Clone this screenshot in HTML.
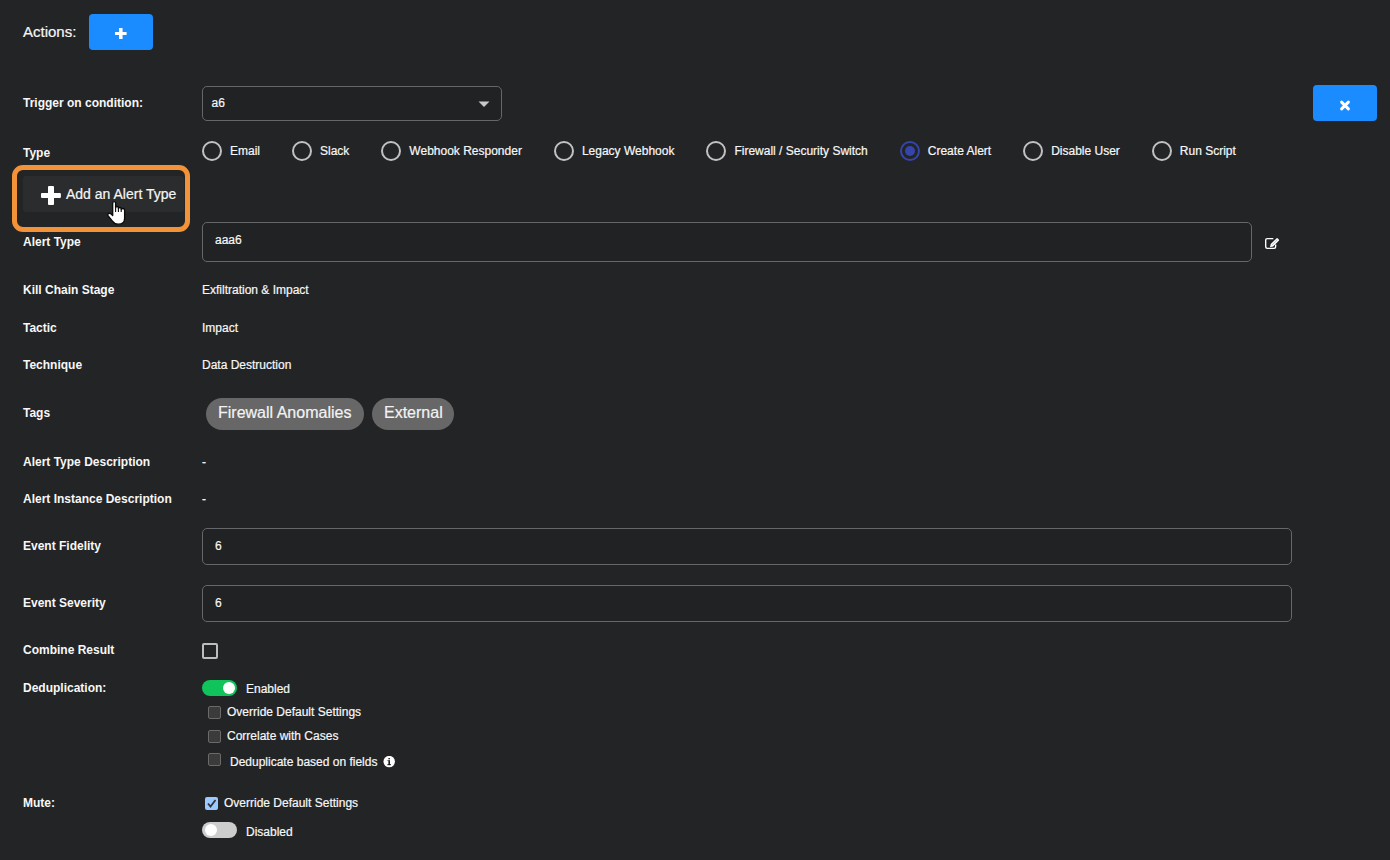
<!DOCTYPE html>
<html><head><meta charset="utf-8">
<style>
html,body{margin:0;padding:0;}
body{width:1390px;height:860px;overflow:hidden;background:#232426;font-family:"Liberation Sans",sans-serif;color:#f7f7f7;position:relative;-webkit-text-stroke:0.2px #f7f7f7;}
.a{position:absolute;white-space:nowrap;line-height:14px;}
.lb{font-size:12px;font-weight:700;left:23px;-webkit-text-stroke:0;}
.v{font-size:12px;left:202px;}
.btn{position:absolute;width:64px;height:36px;background:#1a8cff;border-radius:4px;}
.inp{position:absolute;border:1px solid #65686b;border-radius:5px;box-sizing:border-box;background:#212224;}
.ri{display:flex;align-items:center;height:20px;margin-right:32px;}
.rc{width:20px;height:20px;box-sizing:border-box;border:2px solid #c2c2c2;border-radius:50%;}
.rt{font-size:12px;margin-left:8px;line-height:14px;}
.pill{position:absolute;top:398px;height:32px;border-radius:16px;background:#676767;font-size:16px;line-height:30px;color:#f2f2f2;box-sizing:border-box;padding:0 12px;}
.cb{position:absolute;width:13px;height:13px;box-sizing:border-box;border:1px solid #6a6a6a;background:#3b3b3b;border-radius:2px;}
</style></head>
<body>
<!-- Actions -->
<div class="a" style="left:23px;top:24px;font-size:15px;line-height:15px;">Actions:</div>
<div class="btn" style="left:89px;top:14px;">
  <svg width="64" height="36" style="position:absolute;left:0;top:0"><path d="M26 19.5h11.6" stroke="#fff" stroke-width="3"/><path d="M31.8 14v11" stroke="#fff" stroke-width="3.5"/></svg>
</div>

<!-- Trigger -->
<div class="a lb" style="top:96px;">Trigger on condition:</div>
<div class="inp" style="left:202px;top:86px;width:300px;height:35px;"></div>
<div class="a v" style="left:211.5px;top:96px;">a6</div>
<svg style="position:absolute;left:478px;top:101px" width="12" height="7"><path d="M0.5 0.5h11L6 6z" fill="#c8c8c8"/></svg>

<div class="btn" style="left:1313px;top:85px;">
  <svg width="64" height="36" style="position:absolute;left:0;top:0"><path d="M28.6 17.1L35.4 23.9M35.4 17.1L28.6 23.9" stroke="#fff" stroke-width="3" stroke-linecap="round"/></svg>
</div>

<!-- Type -->
<div class="a lb" style="top:146px;">Type</div>
<div style="position:absolute;left:202px;top:141px;height:20px;display:flex;align-items:center;">
  <div class="ri"><div class="rc"></div><span class="rt">Email</span></div>
  <div class="ri"><div class="rc"></div><span class="rt">Slack</span></div>
  <div class="ri"><div class="rc"></div><span class="rt">Webhook Responder</span></div>
  <div class="ri"><div class="rc"></div><span class="rt">Legacy Webhook</span></div>
  <div class="ri"><div class="rc"></div><span class="rt">Firewall / Security Switch</span></div>
  <div class="ri"><div class="rc" style="border-color:#3545ab;position:relative"><div style="position:absolute;left:3px;top:3px;width:10px;height:10px;border-radius:50%;background:#3545ab"></div></div><span class="rt">Create Alert</span></div>
  <div class="ri"><div class="rc"></div><span class="rt">Disable User</span></div>
  <div class="ri"><div class="rc"></div><span class="rt">Run Script</span></div>
</div>

<!-- Add alert type highlight -->
<div style="position:absolute;left:12px;top:165px;width:178px;height:67px;box-sizing:border-box;border:5px solid #f29339;border-radius:11px;"></div>
<div style="position:absolute;left:23px;top:176px;width:161px;height:36px;background:#2b2c2e;border-radius:3px;"></div>
<svg style="position:absolute;left:41px;top:186px" width="20" height="19"><rect x="7" y="0.1" width="6" height="18.8" rx="1" fill="#fff"/><rect x="0" y="7.1" width="19.9" height="5" rx="1" fill="#fff"/></svg>
<div class="a" style="left:66px;top:187px;font-size:14px;line-height:14px;color:#f4f4f4">Add an Alert Type</div>

<!-- Alert Type -->
<div class="a lb" style="top:235px;">Alert Type</div>
<div class="inp" style="left:202px;top:222px;width:1050px;height:40px;"></div>
<div class="a v" style="left:215px;top:233px;">aaa6</div>
<svg style="position:absolute;left:1264px;top:236px" width="17" height="15"><path d="M9.3 2.55H3.2a1.5 1.5 0 0 0-1.5 1.5v6.8a1.5 1.5 0 0 0 1.5 1.5h6.95a1.5 1.5 0 0 0 1.5-1.5V8.6" fill="none" stroke="#fff" stroke-width="1.35"/><g transform="translate(-0.2 0.9)"><path d="M6.2 10.3L6.9 7.2L12.6 1.5Q13.3 0.8 14 1.5L15 2.5Q15.7 3.2 15 3.9L9.3 9.6Z" fill="#fff"/><path d="M8.2 8.3L13.6 2.9" stroke="#777" stroke-width="0.5"/></g></svg>

<div class="a lb" style="top:283px;">Kill Chain Stage</div>
<div class="a v" style="top:283px;">Exfiltration &amp; Impact</div>
<div class="a lb" style="top:321px;">Tactic</div>
<div class="a v" style="top:321px;">Impact</div>
<div class="a lb" style="top:358px;">Technique</div>
<div class="a v" style="top:358px;">Data Destruction</div>

<div class="a lb" style="top:406px;">Tags</div>
<div class="pill" style="left:206px;width:158px;">Firewall Anomalies</div>
<div class="pill" style="left:372px;width:82px;">External</div>

<div class="a lb" style="top:455px;">Alert Type Description</div>
<div class="a v" style="top:455px;">-</div>
<div class="a lb" style="top:492px;">Alert Instance Description</div>
<div class="a v" style="top:492px;">-</div>

<div class="a lb" style="top:539px;">Event Fidelity</div>
<div class="inp" style="left:202px;top:528px;width:1090px;height:37px;"></div>
<div class="a v" style="left:215px;top:539px;">6</div>
<div class="a lb" style="top:596px;">Event Severity</div>
<div class="inp" style="left:202px;top:585px;width:1090px;height:37px;"></div>
<div class="a v" style="left:215px;top:596px;">6</div>

<div class="a lb" style="top:643px;">Combine Result</div>
<div style="position:absolute;left:202px;top:643px;width:16px;height:16px;box-sizing:border-box;border:2px solid #bdbdbd;border-radius:2px;"></div>

<div class="a lb" style="top:681px;">Deduplication:</div>
<div style="position:absolute;left:202px;top:680px;width:35px;height:16px;border-radius:8px;background:#11c35b;"></div>
<div style="position:absolute;left:223px;top:682px;width:12px;height:12px;border-radius:50%;background:#fff;"></div>
<div class="a v" style="left:246px;top:682px;">Enabled</div>

<div class="cb" style="left:208px;top:706px;"></div>
<div class="a v" style="left:227px;top:705px;">Override Default Settings</div>
<div class="cb" style="left:208px;top:730px;"></div>
<div class="a v" style="left:227px;top:729px;">Correlate with Cases</div>
<div class="cb" style="left:208px;top:753px;"></div>
<div class="a v" style="left:230px;top:755px;">Deduplicate based on fields</div>
<svg style="position:absolute;left:383px;top:756px" width="13" height="12"><circle cx="6.2" cy="5.6" r="5.7" fill="#fff"/><rect x="5.4" y="2" width="1.5" height="1.3" fill="#1a1a1a"/><rect x="5.4" y="4.2" width="1.6" height="4.8" fill="#1a1a1a"/><rect x="4.5" y="4.2" width="1" height="0.9" fill="#1a1a1a"/><rect x="4.3" y="8.2" width="3.7" height="1" fill="#1a1a1a"/></svg>

<div class="a lb" style="top:796px;">Mute:</div>
<div style="position:absolute;left:205px;top:797px;width:13px;height:13px;border-radius:2px;background:#9cc9ff;"></div>
<svg style="position:absolute;left:205px;top:797px" width="13" height="13"><path d="M3 6.5l2.5 3L10.5 3" fill="none" stroke="#333" stroke-width="1.8"/></svg>
<div class="a v" style="left:224px;top:796px;">Override Default Settings</div>
<div style="position:absolute;left:202px;top:822px;width:35px;height:16px;border-radius:8px;background:#cdcdcd;"></div>
<div style="position:absolute;left:205px;top:824px;width:12px;height:12px;border-radius:50%;background:#fff;"></div>
<div class="a v" style="left:246px;top:825px;">Disabled</div>

<!-- cursor -->
<svg style="position:absolute;left:104px;top:198px" width="24" height="30" viewBox="0 0 24 30"><path d="M8.7 17.6V5Q8.7 3.6 10.1 3.6Q11.6 3.6 11.6 5V9.6Q11.7 8.5 13 8.5Q14.3 8.5 14.4 9.8V10.6Q14.5 9.5 15.8 9.5Q17.1 9.5 17.2 10.8V11.6Q17.4 10.5 18.8 10.5Q20.6 10.5 20.6 12.2V20.2Q20.6 26.2 14.2 26.2Q10.6 26.2 8.2 22.8L4.2 17.8Q3.2 16.4 4.4 15.6Q5.6 14.9 6.8 15.8Z" fill="#fff" stroke="#0a0a0a" stroke-width="1.3" stroke-linejoin="round"/><path d="M11.6 9.6V14M14.4 10.6V14M17.2 11.6V14" stroke="#0a0a0a" stroke-width="1.1"/></svg>
</body></html>
